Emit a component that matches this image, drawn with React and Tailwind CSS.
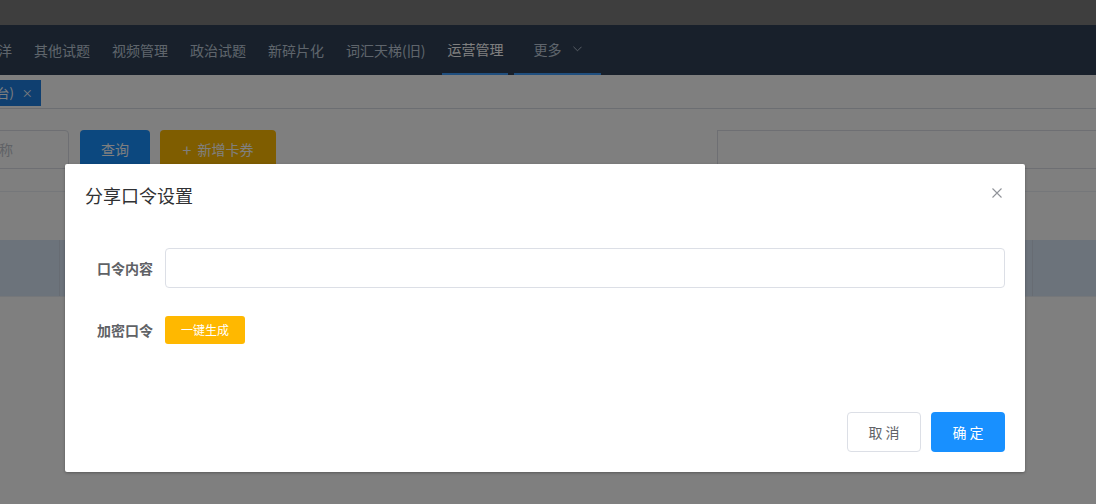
import React from "react";

const menus = ["海洋", "其他试题", "视频管理", "政治试题", "新碎片化", "词汇天梯(旧)"];

function CloseIcon({ className }) {
  return (
    <svg viewBox="0 0 10 10" className={className} fill="none" stroke="currentColor" strokeWidth="1.1">
      <path d="M0.5 0.5 L9.5 9.5 M9.5 0.5 L0.5 9.5" />
    </svg>
  );
}

function ChevronDown() {
  return (
    <svg viewBox="0 0 10 6" className="w-[9px] h-[6px] ml-[12px]" fill="none" stroke="currentColor" strokeWidth="1">
      <path d="M0.5 0.5 L5 5 L9.5 0.5" />
    </svg>
  );
}

export default function App() {
  return (
    <div
      className="relative w-full h-[504px] overflow-hidden bg-white"
      style={{ fontFamily: '"Noto Sans CJK SC", "Noto Sans", sans-serif' }}
    >
      {/* top strip */}
      <div className="h-[25px] bg-[#7c7c7c]" />

      {/* nav bar */}
      <div className="h-[50px] bg-[#304156] flex items-stretch text-[14px] text-[#bfcbd9] whitespace-nowrap">
        <div className="flex items-stretch ml-[-27px]">
          {menus.map((m) => (
            <div key={m} className="px-[11px] flex items-center">
              {m}
            </div>
          ))}
          <div className="mx-[6px] px-[5px] flex items-center text-white border-b-2 border-[#409eff]">运营管理</div>
          <div className="px-[19px] flex items-center border-b-2 border-[#409eff]">
            更多
            <ChevronDown />
          </div>
        </div>
      </div>

      {/* tags view */}
      <div className="h-[34px] border-b border-[#d8dce5] flex items-start pt-[5px]">
        <div className="ml-[-55px] h-[26px] px-[8px] bg-[#1f7ee0] text-white text-[12px] flex items-center gap-[8px] whitespace-nowrap">
          <span className="text-[13px]">卡券(后台)</span>
          <span className="text-[11px]">×</span>
        </div>
      </div>

      {/* content */}
      <div className="pt-[21px]">
        <div className="flex items-start">
          <div className="ml-[-40px] w-[109px] h-[39px] border border-[#dcdfe6] rounded-[4px] flex items-center pl-[24px] text-[14px] text-[#c0c4cc] whitespace-nowrap">
            名称
          </div>
          <button className="ml-[11px] w-[70px] h-[38px] rounded-[4px] bg-[#1890ff] text-white text-[14px]">查询</button>
          <button className="ml-[10px] w-[116px] h-[38px] rounded-[4px] bg-[#ffba00] text-white text-[14px] flex items-center justify-center gap-[6px]">
            <span className="text-[16px] leading-none">+</span>
            <span>新增卡券</span>
          </button>
          <div className="ml-auto w-[379px] h-[39px] border-l border-t border-b border-[#dcdfe6]" />
        </div>
        <div className="h-[23px] border-b border-[#ebeef5]" />
        <div className="h-[48px]" />
        <div className="h-[57px] bg-[#d9e6f7] border-b border-[#ebeef5] flex">
          <div className="w-[60px] border-r border-[#cfd9e6]" />
          <div className="flex-1" />
          <div className="w-[64px] border-l border-[#cfd9e6]" />
        </div>
      </div>

      {/* mask + dialog */}
      <div className="absolute inset-0 bg-black/50">
        <div className="ml-[65px] mt-[164px] w-[960px] bg-white rounded-[2px] shadow-[0_1px_3px_rgba(0,0,0,0.3)]">
          <div className="px-[20px] pt-[19px] pb-[11px] flex items-start justify-between">
            <span className="text-[18px] leading-[24px] text-[#303133]">分享口令设置</span>
            <CloseIcon className="w-[10px] h-[10px] mt-[5px] mr-[3px] text-[#909399]" />
          </div>
          <div className="px-[20px] pt-[30px] pb-[30px]">
            <div className="flex items-center mb-[22px]">
              <label className="w-[80px] pr-[12px] text-right text-[14px] font-bold text-[#606266]">口令内容</label>
              <div className="flex-1 h-[40px] border border-[#dcdfe6] rounded-[4px]" />
            </div>
            <div className="flex items-center h-[40px] mb-[22px]">
              <label className="w-[80px] pr-[12px] text-right text-[14px] font-bold text-[#606266]">加密口令</label>
              <button className="w-[80px] h-[28px] rounded-[3px] bg-[#ffb800] text-white text-[12px]">一键生成</button>
            </div>
          </div>
          <div className="px-[20px] pt-[10px] pb-[20px] flex justify-end gap-[10px]">
            <button className="w-[74px] h-[40px] rounded-[4px] border border-[#dcdfe6] bg-white text-[14px] text-[#606266]">
              取 消
            </button>
            <button className="w-[74px] h-[40px] rounded-[4px] bg-[#1890ff] text-white text-[14px]">确 定</button>
          </div>
        </div>
      </div>
    </div>
  );
}
